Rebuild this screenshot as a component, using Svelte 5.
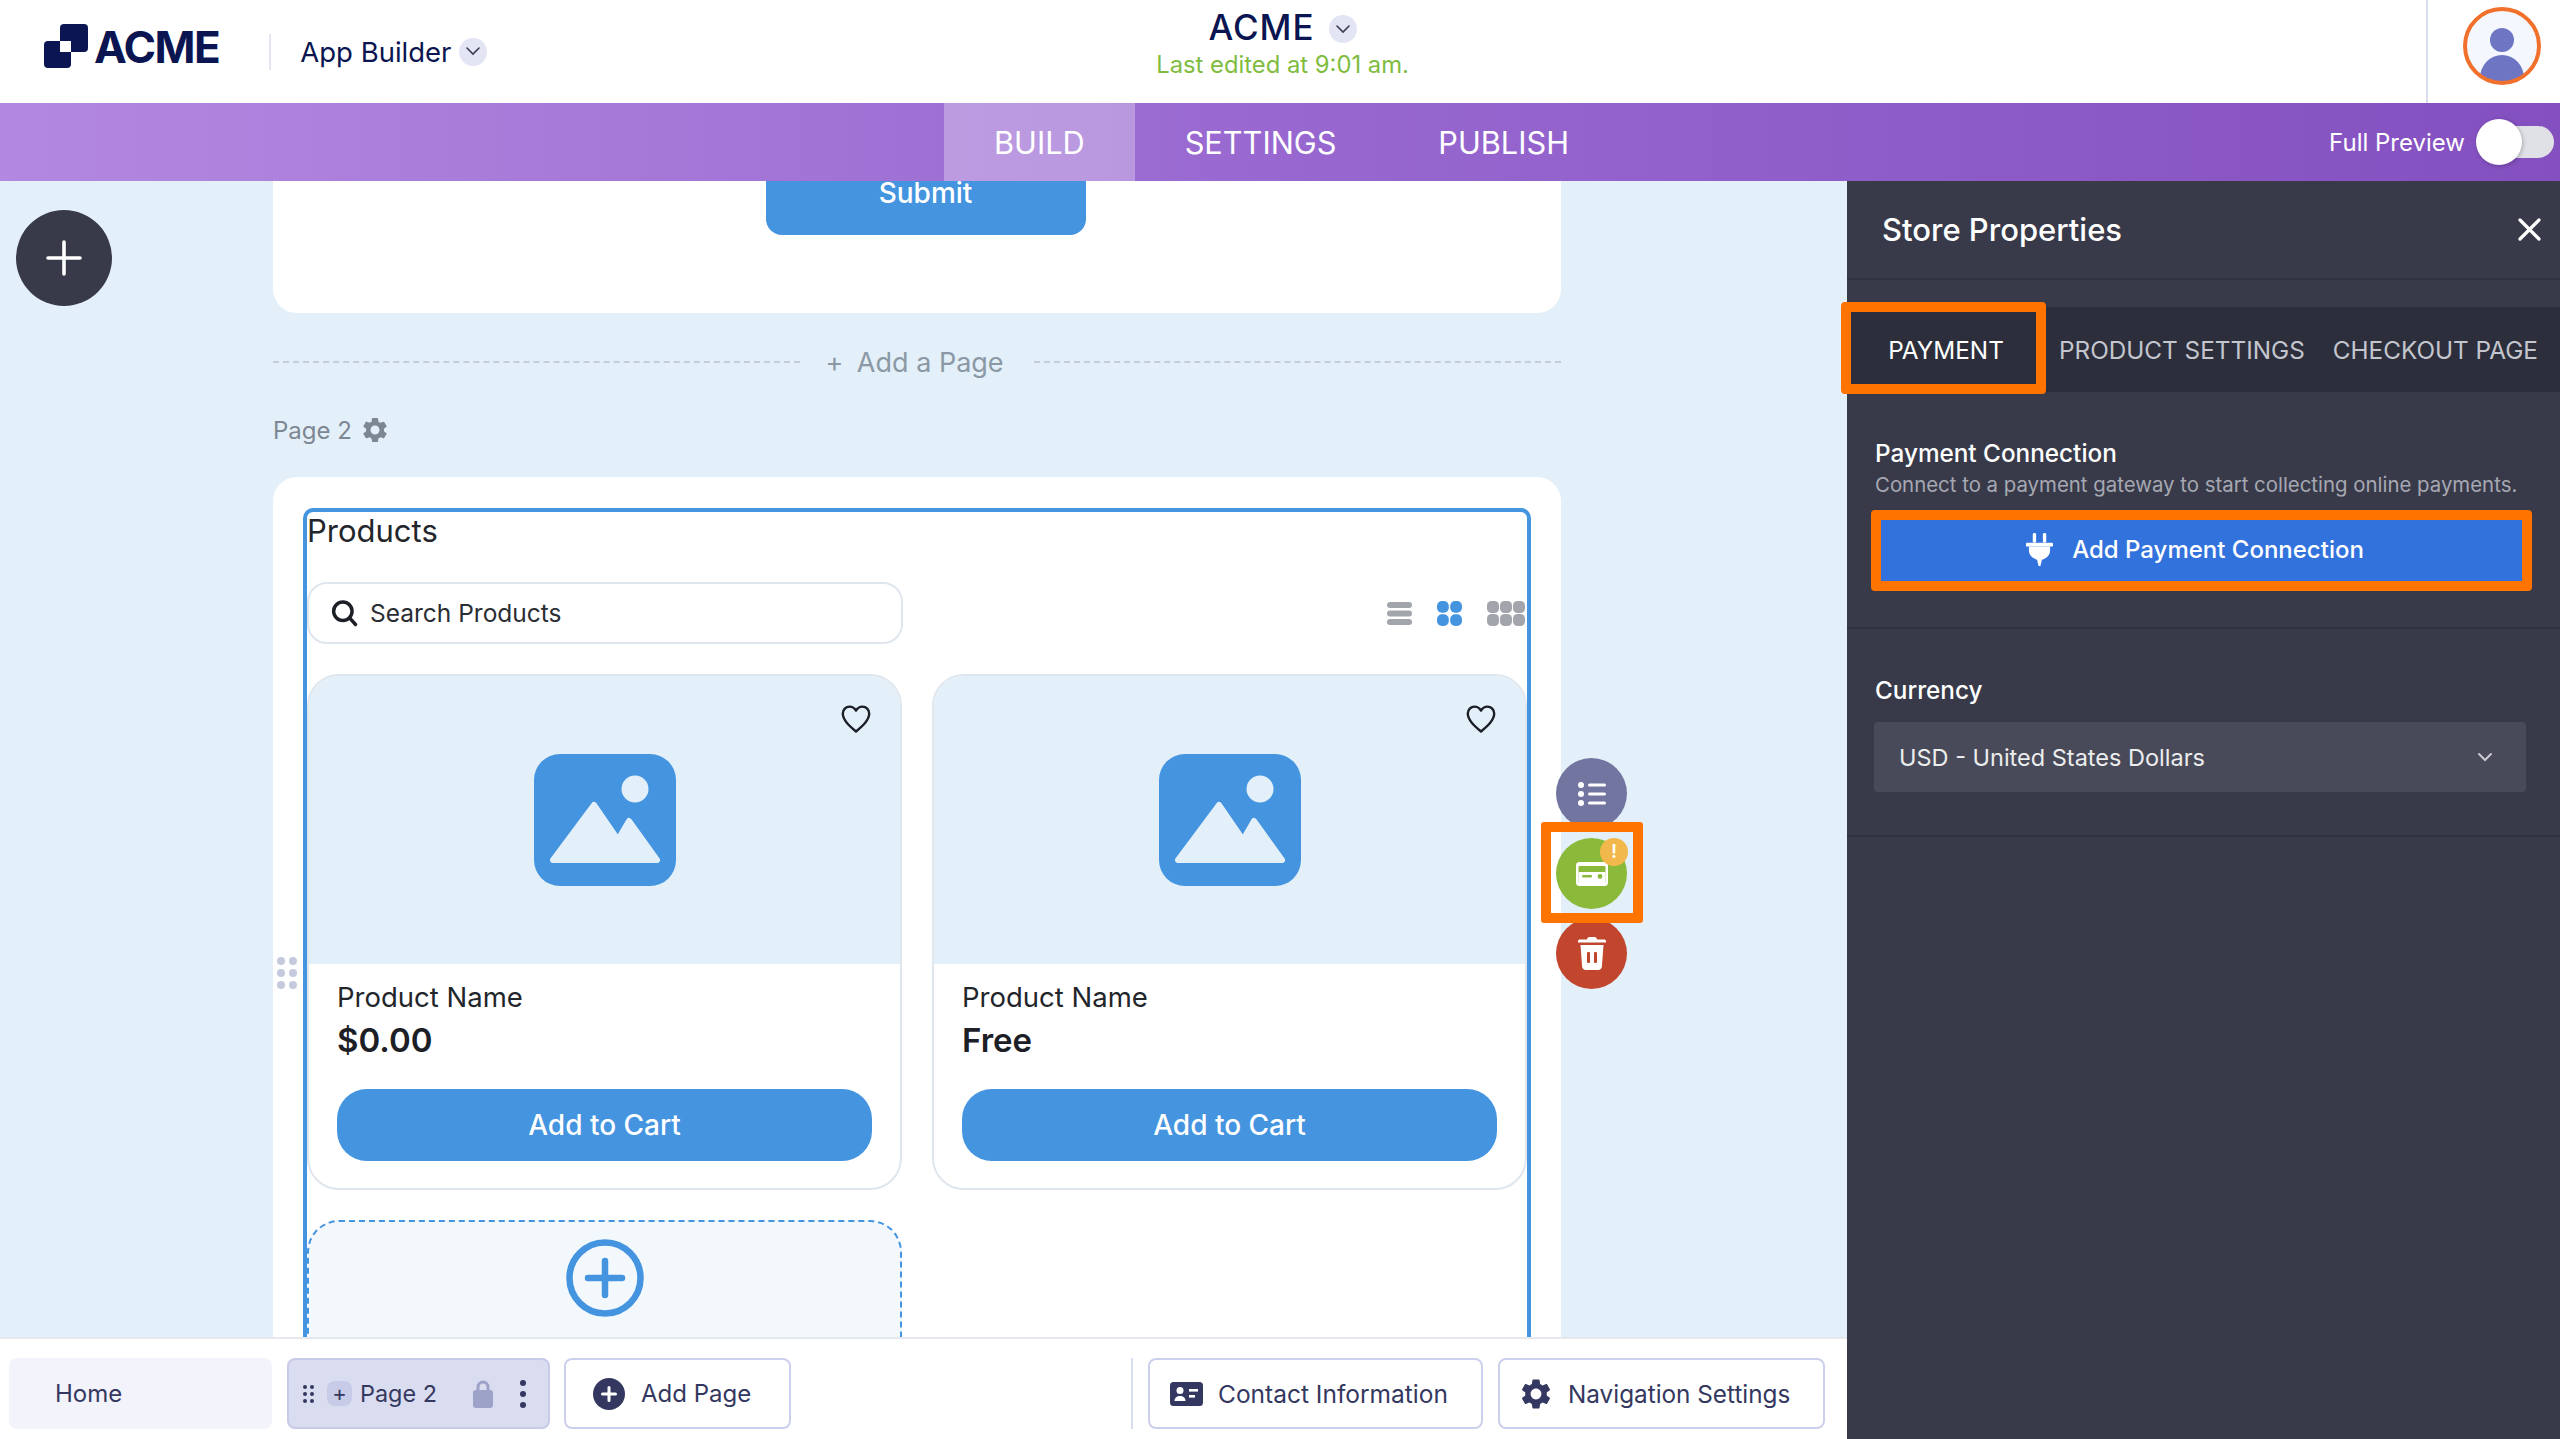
<script lang="ts">
  const products = [
    { name: "Product Name", price: "$0.00" },
    { name: "Product Name", price: "Free" },
  ];
  const gearPath =
    "M19.14 12.94c.04-.3.06-.61.06-.94 0-.32-.02-.64-.07-.94l2.03-1.58c.18-.14.23-.41.12-.61l-1.92-3.32c-.12-.22-.37-.29-.59-.22l-2.39.96c-.5-.38-1.03-.7-1.62-.94l-.36-2.54c-.04-.24-.24-.41-.48-.41h-3.84c-.24 0-.43.17-.47.41l-.36 2.54c-.59.24-1.13.57-1.62.94l-2.39-.96c-.22-.08-.47 0-.59.22L2.74 8.87c-.12.21-.08.47.12.61l2.03 1.58c-.05.3-.09.63-.09.94s.02.64.07.94l-2.03 1.58c-.18.14-.23.41-.12.61l1.92 3.32c.12.22.37.29.59.22l2.39-.96c.5.38 1.03.7 1.62.94l.36 2.54c.05.24.24.41.48.41h3.84c.24 0 .44-.17.47-.41l.36-2.54c.59-.24 1.13-.56 1.62-.94l2.39.96c.22.08.47 0 .59-.22l1.92-3.32c.12-.22.07-.47-.12-.61l-2.01-1.58zM12 15.6c-1.98 0-3.6-1.62-3.6-3.6s1.62-3.6 3.6-3.6 3.6 1.62 3.6 3.6-1.62 3.6-3.6 3.6z";
</script>

{#snippet chevron()}
  <span class="chip">
    <svg width="14" height="9" viewBox="0 0 14 9"><path d="M1 1l6 6 6-6" fill="none" stroke="#3a3d52" stroke-width="1.6" stroke-linecap="round" /></svg>
  </span>
{/snippet}

<div class="app">
  <header class="top">
    <div class="top-left">
      <svg class="logo" width="44" height="44" viewBox="0 0 44 44">
        <rect x="16" y="0" width="28" height="28" rx="4" fill="#0a1551" />
        <rect x="0" y="17" width="27" height="27" rx="4" fill="#0a1551" />
        <rect x="16" y="17" width="11" height="11" fill="#fff" />
      </svg>
      <span class="logo-text">ACME</span>
      <span class="top-sep"></span>
      <span class="app-name">App Builder</span>
      {@render chevron()}
    </div>
    <div class="top-center">
      <div class="title-row"><span class="title">ACME</span>{@render chevron()}</div>
      <div class="edited">Last edited at 9:01 am.</div>
    </div>
    <div class="top-right">
      <svg width="78" height="78" viewBox="0 0 78 78">
        <defs><clipPath id="av"><circle cx="39" cy="39" r="37" /></clipPath></defs>
        <circle cx="39" cy="39" r="37" fill="#f4f7fe" />
        <g clip-path="url(#av)" fill="#6e76c4">
          <circle cx="39" cy="33" r="12" />
          <ellipse cx="39" cy="71" rx="22" ry="23" />
        </g>
        <circle cx="39" cy="39" r="37" fill="none" stroke="#f0702c" stroke-width="4" />
      </svg>
    </div>
  </header>

  <nav class="bar">
    <a class="tab active">BUILD</a>
    <a class="tab">SETTINGS</a>
    <a class="tab">PUBLISH</a>
    <div class="preview">
      <span>Full Preview</span>
      <span class="toggle"><span class="knob"></span></span>
    </div>
  </nav>

  <div class="body">
    <div class="main">
      <div class="canvas">
        <button class="fab" aria-label="Add">
          <svg width="36" height="36" viewBox="0 0 36 36"><path d="M18 2v32M2 18h32" stroke="#fff" stroke-width="3.6" stroke-linecap="round" /></svg>
        </button>

        <div class="pages">
          <div class="page-end"><div class="submit">Submit</div></div>

          <div class="add-row">
            <span class="dash"></span>
            <span class="add-label"><span class="add-plus">+</span> Add a Page</span>
            <span class="dash"></span>
          </div>

          <div class="page-label">
            Page 2
            <svg width="30" height="30" viewBox="0 0 24 24"><path d={gearPath} fill="#7d8794" /></svg>
          </div>

          <div class="page">
            <div class="drag">
              {#each Array(6) as _}<i></i>{/each}
            </div>
            <div class="selection">
              <div class="selection-title">Products</div>
              <div class="toolbar">
                <div class="search">
                  <svg width="30" height="30" viewBox="0 0 26 26"><circle cx="12" cy="11.500" r="8" fill="none" stroke="#1c2026" stroke-width="3" /><path d="M18 17.500l5 5.500" stroke="#1c2026" stroke-width="3" stroke-linecap="round" /></svg>
                  <span>Search Products</span>
                </div>
                <div class="views">
                  <svg width="25" height="23" viewBox="0 0 25 23" fill="#a2a6ac"><rect width="25" height="6" rx="3" /><rect y="8.500" width="25" height="6" rx="3" /><rect y="17" width="25" height="6" rx="3" /></svg>
                  <svg width="25" height="25" viewBox="0 0 25 25" fill="#4494e0"><rect width="11.800" height="11.800" rx="5" /><rect x="13.200" width="11.800" height="11.800" rx="5" /><rect y="13.200" width="11.800" height="11.800" rx="5" /><rect x="13.200" y="13.200" width="11.800" height="11.800" rx="5" /></svg>
                  <svg width="38" height="25" viewBox="0 0 38 25" fill="#a2a6ac">
                    {#each [0, 13, 26] as x}
                      <rect {x} width="12" height="12" rx="4.500" /><rect {x} y="13" width="12" height="12" rx="4.500" />
                    {/each}
                  </svg>
                </div>
              </div>

              <div class="grid">
                {#each products as p}
                  <article class="card">
                    <div class="thumb">
                      <svg class="heart" width="32" height="32" viewBox="0 0 32 32"><path d="M16 28.500C9 22.500 2.800 17 2.800 10.600 2.800 6.600 5.800 3.600 9.500 3.600c2.700 0 5.100 1.500 6.500 4 1.400-2.500 3.800-4 6.500-4 3.700 0 6.700 3 6.700 7 0 6.400-6.200 11.900-13.200 17.900z" fill="none" stroke="#1c2026" stroke-width="2.400" stroke-linejoin="round" /></svg>
                      <svg width="142" height="132" viewBox="0 0 142 132">
                        <rect width="142" height="132" rx="26" fill="#4494e0" />
                        <circle cx="101" cy="35" r="13.500" fill="#e3f0f9" />
                        <path d="M60 51L84 86 95 67 123 106H19z" fill="#e3f0f9" stroke="#e3f0f9" stroke-width="6" stroke-linejoin="round" />
                      </svg>
                    </div>
                    <div class="info">
                      <div class="name">{p.name}</div>
                      <div class="price">{p.price}</div>
                      <button class="cart">Add to Cart</button>
                    </div>
                  </article>
                {/each}
                <div class="slot">
                  <svg width="78" height="78" viewBox="0 0 78 78"><circle cx="39" cy="39" r="35.500" fill="none" stroke="#4494e0" stroke-width="6.500" /><path d="M39 22v34M22 39h34" stroke="#4494e0" stroke-width="6.500" stroke-linecap="round" /></svg>
                </div>
              </div>
            </div>
          </div>
        </div>

        <div class="rail">
          <button class="round list" aria-label="List">
            <svg width="28" height="24" viewBox="0 0 28 24" fill="#fff"><circle cx="3" cy="3" r="3" /><circle cx="3" cy="12" r="3" /><circle cx="3" cy="21" r="3" /><rect x="10" y="1.500" width="18" height="3" rx="1.500" /><rect x="10" y="10.500" width="18" height="3" rx="1.500" /><rect x="10" y="19.500" width="18" height="3" rx="1.500" /></svg>
          </button>
          <button class="round pay" aria-label="Payment">
            <svg width="32" height="24" viewBox="0 0 32 24"><rect width="32" height="24" rx="3.500" fill="#fff" /><rect x="2.500" y="4" width="27" height="17" rx="1" fill="#8bb93a" /><rect x="2.500" y="10" width="27" height="11" rx="1" fill="#fff" /><rect x="6" y="13" width="10" height="2.600" rx="1.300" fill="#8bb93a" /><circle cx="24" cy="14.400" r="2.400" fill="#8bb93a" /></svg>
            <span class="badge">!</span>
          </button>
          <button class="round del" aria-label="Delete">
            <svg width="28" height="33" viewBox="0 0 28 33" fill="#fff"><path d="M9 2.500C9 1 10 0 11.500 0h5C18 0 19 1 19 2.500h7.500A1.500 1.500 0 0 1 28 4v1.500H0V4a1.500 1.500 0 0 1 1.500-1.500z" /><path d="M2.500 8h23l-1.600 21.500c-.2 2-1.600 3.500-3.600 3.500H7.700c-2 0-3.400-1.500-3.600-3.500z" /><rect x="9" y="15" width="3" height="11" rx="1" fill="#c2462d" /><rect x="16" y="15" width="3" height="11" rx="1" fill="#c2462d" /></svg>
          </button>
          <span class="rail-mark"></span>
        </div>
      </div>

      <footer class="foot">
        <div class="ptab home">Home</div>
        <div class="ptab current">
          <span class="dots6">{#each Array(6) as _}<i></i>{/each}</span>
          <span class="plus-chip">+</span>
          <span class="ptab-name">Page 2</span>
          <svg class="lock" width="20" height="28" viewBox="0 0 20 28"><path d="M5 12V7a5 5 0 0 1 10 0v5" fill="none" stroke="#9da2c9" stroke-width="3" /><rect y="10" width="20" height="18" rx="3" fill="#9da2c9" /></svg>
          <span class="kebab"><i></i><i></i><i></i></span>
        </div>
        <button class="fbtn addpage">
          <svg width="32" height="32" viewBox="0 0 32 32"><circle cx="16" cy="16" r="16" fill="#343860" /><path d="M16 9.500v13M9.500 16h13" stroke="#fff" stroke-width="3" stroke-linecap="round" /></svg>
          Add Page
        </button>
        <span class="foot-sep"></span>
        <button class="fbtn contact">
          <svg width="33" height="24" viewBox="0 0 33 24"><rect width="33" height="24" rx="3.500" fill="#343860" /><circle cx="10" cy="8.500" r="3.500" fill="#fff" /><path d="M4.500 19c0-3.500 2.500-5 5.500-5s5.500 1.500 5.500 5z" fill="#fff" /><rect x="19" y="7" width="9" height="2.600" fill="#fff" /><rect x="19" y="13" width="6" height="2.600" fill="#fff" /></svg>
          Contact Information
        </button>
        <button class="fbtn nav">
          <svg width="36" height="36" viewBox="0 0 24 24"><path d={gearPath} fill="#343860" /></svg>
          Navigation Settings
        </button>
      </footer>
    </div>

    <aside class="panel">
      <div class="panel-head">
        <span>Store Properties</span>
        <svg width="23" height="23" viewBox="0 0 23 23"><path d="M2 2l19 19M21 2L2 21" stroke="#fff" stroke-width="3.200" stroke-linecap="round" /></svg>
      </div>
      <div class="ptabs">
        <div class="ptabs-item first">PAYMENT<span class="ring"></span></div>
        <div class="ptabs-item second">PRODUCT SETTINGS</div>
        <div class="ptabs-item third">CHECKOUT PAGE</div>
      </div>
      <section class="sec conn">
        <h4>Payment Connection</h4>
        <p>Connect to a payment gateway to start collecting online payments.</p>
        <div class="hl">
          <button class="connect">
            <svg width="27" height="33" viewBox="0 0 28 34" fill="#fff"><rect x="7" y="0" width="3.500" height="10" rx="1.500" /><rect x="17.500" y="0" width="3.500" height="10" rx="1.500" /><rect y="10" width="28" height="4" rx="1" /><path d="M3 14h22v4c0 5-4 8.500-8.500 9.500L15 34h-2l-1.500-6.500C7 26.500 3 23 3 18z" /></svg>
            Add Payment Connection
          </button>
        </div>
      </section>
      <section class="sec cur">
        <h4>Currency</h4>
        <div class="select">
          <span>USD - United States Dollars</span>
          <svg width="16" height="10" viewBox="0 0 16 10"><path d="M2 2l6 6 6-6" fill="none" stroke="#c9cad2" stroke-width="2" stroke-linecap="round" /></svg>
        </div>
      </section>
    </aside>
  </div>
</div>

<style>
  :global(body) {
    margin: 0;
    font-family: Inter, "Liberation Sans", sans-serif;
    background: #fff;
  }
  button {
    font-family: inherit;
    border: 0;
    padding: 0;
  }

  .app {
    width: 2560px;
    height: 1439px;
    display: flex;
    flex-direction: column;
    overflow: hidden;
  }

  /* header */
  .top {
    height: 103px;
    flex: none;
    display: flex;
    align-items: stretch;
    color: #0a1551;
  }
  .top-left {
    width: 1134px;
    display: flex;
    align-items: center;
    padding-left: 44px;
    box-sizing: border-box;
  }
  .logo {
    margin-top: -11px;
  }
  .logo-text {
    font-size: 44px;
    font-weight: 700;
    letter-spacing: -1.5px;
    margin-left: 6px;
    margin-top: -9px;
  }
  .top-sep {
    width: 2px;
    height: 36px;
    background: #e3e5f5;
    margin: 0 29px 0 50px;
  }
  .app-name {
    font-size: 27.5px;
    margin-right: 8px;
  }
  .chip {
    width: 28px;
    height: 28px;
    border-radius: 50%;
    background: #e3e5f5;
    display: flex;
    align-items: center;
    justify-content: center;
  }
  .top-center {
    width: 297px;
    text-align: center;
    padding-top: 8px;
  }
  .title-row {
    display: flex;
    justify-content: center;
    align-items: center;
    gap: 14px;
    height: 38px;
  }
  .title-row .chip {
    margin-top: 4px;
  }
  .title {
    font-size: 35px;
    font-weight: 500;
    letter-spacing: 1px;
  }
  .edited {
    color: #7fbc3f;
    font-size: 23.8px;
    line-height: 38px;
  }
  .top-right {
    margin-left: auto;
    width: 134px;
    border-left: 2px solid #d9ddf0;
    box-sizing: border-box;
    padding: 7px 0 0 35px;
  }

  /* purple bar */
  .bar {
    height: 78px;
    flex: none;
    display: flex;
    align-items: stretch;
    padding-left: 944px;
    background: linear-gradient(90deg, #b388e0 0%, #9868d0 50%, #8450c0 100%);
    color: #fff;
    font-size: 30.7px;
  }
  .tab {
    display: flex;
    align-items: center;
    padding: 0 50px;
    margin-right: 2px;
  }
  .tab.active {
    background: rgba(255, 255, 255, 0.3);
    margin-right: 0;
  }
  .preview {
    margin-left: auto;
    display: flex;
    align-items: center;
    gap: 19px;
    padding-right: 6px;
    font-size: 24px;
  }
  .toggle {
    position: relative;
    width: 70px;
    height: 32px;
    border-radius: 16px;
    background: #e0e1e6;
  }
  .knob {
    position: absolute;
    left: -8px;
    top: -7px;
    width: 46px;
    height: 46px;
    border-radius: 50%;
    background: #fff;
    box-shadow: 1px 1px 4px rgba(0, 0, 0, 0.25);
  }

  .body {
    flex: 1;
    min-height: 0;
    display: flex;
  }
  .main {
    width: 1847px;
    flex: none;
    display: flex;
    flex-direction: column;
  }

  /* canvas */
  .canvas {
    position: relative;
    flex: 1;
    min-height: 0;
    overflow: hidden;
    background: #e3f0f9;
  }
  .fab {
    position: absolute;
    left: 16px;
    top: 29px;
    width: 96px;
    height: 96px;
    border-radius: 50%;
    background: #383a4a;
    display: flex;
    align-items: center;
    justify-content: center;
  }
  .pages {
    width: 1288px;
    margin-left: 273px;
  }
  .page-end {
    height: 132px;
    box-sizing: border-box;
    background: #fff;
    border-radius: 0 0 24px 24px;
    padding-bottom: 78px;
    display: flex;
    justify-content: center;
  }
  .submit {
    width: 320px;
    height: 54px;
    line-height: 24px;
    text-align: center;
    color: #fff;
    background: #4494e0;
    border-radius: 0 0 16px 16px;
    font-size: 28px;
    font-weight: 500;
    margin-left: 17px;
  }
  .add-row {
    display: flex;
    align-items: center;
    height: 40px;
    margin-top: 29px;
    color: #8b98a5;
    font-size: 27px;
  }
  .dash {
    flex: 1;
    border-top: 2px dashed #c3ced8;
  }
  .add-label {
    padding: 0 30px;
    margin-left: -5px;
  }
  .add-plus {
    margin-right: 6px;
  }
  .page-label {
    display: flex;
    align-items: center;
    gap: 8px;
    height: 30px;
    margin-top: 33px;
    color: #7d8794;
    font-size: 24px;
  }
  .page {
    position: relative;
    margin-top: 32px;
    background: #fff;
    border-radius: 24px 24px 0 0;
    padding: 31px 30px 0;
  }
  .drag {
    position: absolute;
    left: 4px;
    top: 480px;
    display: grid;
    grid-template-columns: 8px 8px;
    gap: 4px;
  }
  .drag i {
    width: 8px;
    height: 8px;
    border-radius: 50%;
    background: #c5cadf;
  }
  .selection {
    border: 4px solid #4494e0;
    border-bottom: 0;
    border-radius: 10px 10px 0 0;
    height: 1000px;
    box-sizing: border-box;
  }
  .selection-title {
    font-size: 31px;
    line-height: 38px;
    color: #22262b;
  }
  .toolbar {
    display: flex;
    align-items: center;
    justify-content: space-between;
    margin-top: 32px;
  }
  .search {
    width: 596px;
    height: 62px;
    box-sizing: border-box;
    border: 2px solid #e0e6ee;
    border-radius: 20px;
    display: flex;
    align-items: center;
    gap: 11px;
    padding-left: 20px;
    font-size: 24.5px;
    color: #2a2e33;
  }
  .views {
    display: flex;
    align-items: center;
    gap: 25px;
    padding-right: 2px;
  }
  .grid {
    display: grid;
    grid-template-columns: 595px 595px;
    gap: 30px;
    margin-top: 30px;
  }
  .card {
    height: 516px;
    box-sizing: border-box;
    border: 2px solid #e0e6ee;
    border-radius: 32px;
    overflow: hidden;
  }
  .thumb {
    position: relative;
    height: 288px;
    background: #e3f0f9;
    display: flex;
    align-items: center;
    justify-content: center;
  }
  .heart {
    position: absolute;
    top: 27px;
    right: 28px;
  }
  .info {
    padding: 15px 28px 0;
  }
  .name {
    font-size: 27.5px;
    line-height: 36px;
    color: #22262b;
  }
  .price {
    font-size: 33px;
    line-height: 44px;
    font-weight: 600;
    margin-top: 3px;
    color: #1c2026;
  }
  .cart {
    display: block;
    width: 100%;
    height: 72px;
    margin-top: 27px;
    border-radius: 30px;
    background: #4494e0;
    color: #fff;
    font-size: 28px;
    font-weight: 500;
  }
  .slot {
    height: 200px;
    box-sizing: border-box;
    border: 2px dashed #4494e0;
    border-radius: 32px;
    background: #f3f8fd;
    display: flex;
    justify-content: center;
    padding-top: 17px;
  }

  /* floating buttons beside the selection */
  .rail {
    position: absolute;
    left: 1556px;
    top: 577px;
    width: 71px;
  }
  .round {
    display: flex;
    position: relative;
    width: 71px;
    height: 71px;
    border-radius: 50%;
    align-items: center;
    justify-content: center;
    margin-bottom: 9px;
  }
  .list {
    background: #72759f;
  }
  .pay {
    background: #8bb93a;
    z-index: 2;
  }
  .del {
    background: #c2462d;
  }
  .badge {
    position: absolute;
    right: -1px;
    top: 0;
    width: 28px;
    height: 28px;
    border-radius: 50%;
    background: #f2b84b;
    color: #fff;
    font-size: 19px;
    line-height: 28px;
    font-weight: 600;
  }
  .rail-mark {
    position: absolute;
    left: -15px;
    top: 64px;
    width: 102px;
    height: 101px;
    box-sizing: border-box;
    border: 10px solid #ff7300;
    border-radius: 3px;
    z-index: 3;
  }

  /* footer */
  .foot {
    height: 102px;
    flex: none;
    box-sizing: border-box;
    border-top: 2px solid #e6e8ee;
    background: #fff;
    padding: 19px 22px 0 9px;
    display: flex;
    align-items: flex-start;
    color: #343860;
    font-size: 24px;
  }
  .ptab {
    width: 263px;
    height: 71px;
    box-sizing: border-box;
    border-radius: 8px;
    display: flex;
    align-items: center;
  }
  .home {
    background: #f3f3fc;
    padding-left: 46px;
  }
  .current {
    margin-left: 15px;
    background: #dadcef;
    border: 2px solid #c8cbe8;
    padding-left: 14px;
  }
  .dots6 {
    display: grid;
    grid-template-columns: 4px 4px;
    gap: 3px 3px;
  }
  .dots6 i,
  .kebab i {
    display: block;
    border-radius: 50%;
    background: #343860;
    width: 4px;
    height: 4px;
  }
  .plus-chip {
    width: 25px;
    height: 25px;
    margin-left: 13px;
    border-radius: 8px;
    background: #c8cbe8;
    text-align: center;
    line-height: 24px;
    font-size: 22px;
  }
  .ptab-name {
    margin-left: 8px;
    font-size: 23.4px;
  }
  .lock {
    margin-left: 36px;
  }
  .kebab {
    margin-left: 27px;
    display: flex;
    flex-direction: column;
    gap: 5px;
  }
  .kebab i {
    width: 6px;
    height: 6px;
  }
  .fbtn {
    height: 71px;
    box-sizing: border-box;
    border: 2px solid #cdd0ec;
    border-radius: 8px;
    background: #fff;
    color: #343860;
    font-size: 24px;
    display: flex;
    align-items: center;
  }
  .addpage {
    margin-left: 14px;
    width: 227px;
    padding-left: 27px;
    gap: 16px;
  }
  .foot-sep {
    margin-left: auto;
    width: 2px;
    height: 71px;
    background: #d9ddf0;
  }
  .contact {
    margin-left: 15px;
    width: 335px;
    padding-left: 20px;
    gap: 15px;
    font-size: 24.5px;
  }
  .nav {
    margin-left: 15px;
    width: 327px;
    padding-left: 18px;
    gap: 14px;
    font-size: 24.3px;
  }

  /* side panel */
  .panel {
    width: 713px;
    flex: none;
    background: #383a4a;
    color: #fff;
    position: relative;
  }
  .panel-head {
    height: 99px;
    box-sizing: border-box;
    border-bottom: 2px solid #2f3140;
    display: flex;
    align-items: center;
    justify-content: space-between;
    padding: 0 19px 0 35px;
    font-size: 31px;
    font-weight: 500;
  }
  .ptabs {
    margin-top: 27px;
    height: 85px;
    background: #2c2e3c;
    display: flex;
    align-items: center;
    font-size: 24.3px;
    color: #c4c6ce;
  }
  .ptabs-item.first {
    position: relative;
    width: 198px;
    height: 100%;
    display: flex;
    align-items: center;
    justify-content: center;
    color: #fff;
  }
  .ring {
    position: absolute;
    left: -6px;
    right: -1px;
    top: -5px;
    bottom: -2px;
    border: 10px solid #ff7300;
    border-radius: 4px;
  }
  .second {
    margin-left: 14px;
  }
  .third {
    margin-left: 28px;
  }
  .sec {
    border-bottom: 2px solid #2f3140;
  }
  .sec h4 {
    margin: 0;
    font-size: 24.3px;
    line-height: 30px;
    font-weight: 500;
  }
  .conn {
    padding: 46px 0 36px 28px;
  }
  .conn p {
    margin: 3px 0 0;
    font-size: 20.4px;
    line-height: 28px;
    color: #a6a8b2;
  }
  .hl {
    margin: 11px 0 0 -4px;
    width: 661px;
    box-sizing: border-box;
    border: 10px solid #ff7300;
    border-radius: 4px;
  }
  .connect {
    width: 100%;
    height: 61px;
    background: #3272dc;
    color: #fff;
    font-size: 24px;
    font-weight: 500;
    display: flex;
    align-items: center;
    justify-content: center;
    gap: 19px;
    padding: 0 13px 2px 0;
  }
  .cur {
    padding: 46px 0 43px 28px;
  }
  .select {
    width: 652px;
    height: 70px;
    box-sizing: border-box;
    margin: 17px 0 0 -1px;
    background: #484a5a;
    border-radius: 4px;
    display: flex;
    align-items: center;
    justify-content: space-between;
    padding: 0 33px 0 25px;
    font-size: 23.500px;
    color: #eceded;
  }
</style>
